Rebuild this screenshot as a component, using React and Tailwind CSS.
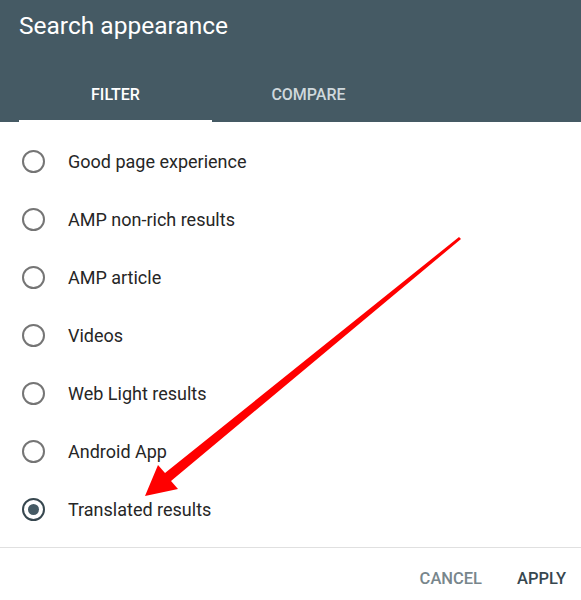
import { useState } from 'react';

const options = [
  'Good page experience',
  'AMP non-rich results',
  'AMP article',
  'Videos',
  'Web Light results',
  'Android App',
  'Translated results',
];

function Radio({ checked }) {
  return (
    <span
      className={`flex h-[23px] w-[23px] items-center justify-center rounded-full border-[2.5px] ${
        checked ? 'border-[#37474f]' : 'border-[#757575]'
      }`}
    >
      {checked && <span className="h-[11px] w-[11px] rounded-full bg-[#455a64]" />}
    </span>
  );
}

export default function App() {
  const [selected, setSelected] = useState('Translated results');
  const [tab, setTab] = useState('filter');

  return (
    <div className="relative h-[600px] w-[581px] overflow-hidden bg-white font-['Roboto',sans-serif]">
      <div className="bg-[#455a64]">
        <div className="flex h-[66px] items-center px-[19px] pb-[13px]">
          <h1 className="text-[24.5px] text-white">Search appearance</h1>
        </div>
        <div className="flex h-[56px] px-[19px]">
          {['filter', 'compare'].map((t) => (
            <button
              key={t}
              onClick={() => setTab(t)}
              className={`relative flex w-[193px] items-center justify-center pt-[1px] text-[16px] font-medium uppercase ${
                tab === t ? 'text-white' : 'text-[#cfd8dc]'
              }`}
            >
              {t}
              {tab === t && <span className="absolute bottom-0 left-0 h-[2px] w-full bg-white" />}
            </button>
          ))}
        </div>
      </div>

      <div className="pt-[10px] pb-[9px]">
        {options.map((opt) => (
          <label
            key={opt}
            onClick={() => setSelected(opt)}
            className="flex h-[58px] cursor-pointer items-center gap-[23px] pl-[22px]"
          >
            <Radio checked={selected === opt} />
            <span className="text-[18px] text-[#262626]">{opt}</span>
          </label>
        ))}
      </div>

      <div className="flex h-[64px] items-center justify-end gap-[35px] border-t border-[#e0e0e0] pr-[15px]">
        <button className="text-[16.5px] font-medium text-[#78868c]">CANCEL</button>
        <button className="text-[16.5px] font-medium text-[#37474f]">APPLY</button>
      </div>

      <svg className="pointer-events-none absolute left-0 top-0" width="581" height="600">
        <polygon
          points="461,239 171,481 178,489 145,496 158,465 165,473 459,237"
          fill="#ff0000"
        />
      </svg>
    </div>
  );
}
